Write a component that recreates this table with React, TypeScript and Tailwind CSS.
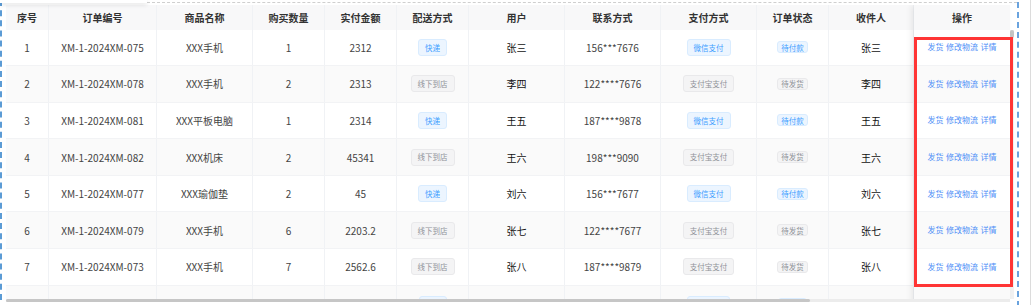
import React from "react";

type Row = {
  no: number;
  code: string;
  goods: string;
  qty: number;
  amount: string;
  ship: string;
  user: string;
  phone: string;
  pay: string;
  status: string;
  receiver: string;
};

const rows: Row[] = [
  { no: 1, code: "XM-1-2024XM-075", goods: "XXX手机", qty: 1, amount: "2312", ship: "快递", user: "张三", phone: "156***7676", pay: "微信支付", status: "待付款", receiver: "张三" },
  { no: 2, code: "XM-1-2024XM-078", goods: "XXX手机", qty: 2, amount: "2313", ship: "线下到店", user: "李四", phone: "122****7676", pay: "支付宝支付", status: "待发货", receiver: "李四" },
  { no: 3, code: "XM-1-2024XM-081", goods: "XXX平板电脑", qty: 1, amount: "2314", ship: "快递", user: "王五", phone: "187****9878", pay: "微信支付", status: "待付款", receiver: "王五" },
  { no: 4, code: "XM-1-2024XM-082", goods: "XXX机床", qty: 2, amount: "45341", ship: "线下到店", user: "王六", phone: "198***9090", pay: "支付宝支付", status: "待发货", receiver: "王六" },
  { no: 5, code: "XM-1-2024XM-077", goods: "XXX瑜伽垫", qty: 2, amount: "45", ship: "快递", user: "刘六", phone: "156***7677", pay: "微信支付", status: "待付款", receiver: "刘六" },
  { no: 6, code: "XM-1-2024XM-079", goods: "XXX手机", qty: 6, amount: "2203.2", ship: "线下到店", user: "张七", phone: "122****7677", pay: "支付宝支付", status: "待发货", receiver: "张七" },
  { no: 7, code: "XM-1-2024XM-073", goods: "XXX手机", qty: 7, amount: "2562.6", ship: "线下到店", user: "张八", phone: "187****9879", pay: "支付宝支付", status: "待发货", receiver: "张八" },
];

const headers = ["序号", "订单编号", "商品名称", "购买数量", "实付金额", "配送方式", "用户", "联系方式", "支付方式", "订单状态", "收件人"];

const cols = "grid grid-cols-[43px_108px_96px_72px_72px_72px_96px_96px_96px_72px_85px]";

function Tag({ children, blue, small }: { children?: React.ReactNode; blue: boolean; small?: boolean }) {
  return (
    <span
      className={`inline-flex items-center justify-center rounded-[3px] border text-[7.5px] leading-none ${
        small ? "h-[12px] px-[3px]" : "h-[17px] px-[6px]"
      } ${blue ? "bg-[#ecf5ff] border-[#d9ecff] text-[#409eff]" : "bg-[#f4f4f5] border-[#e9e9eb] text-[#909399]"}`}
    >
      {children}
    </span>
  );
}

function Cell({ children, className = "" }: { children?: React.ReactNode; className?: string }) {
  return (
    <div className={`flex items-center justify-center border-r border-[#f0f2f5] whitespace-nowrap ${className}`}>
      {children}
    </div>
  );
}

export default function App() {
  return (
    <div className="relative w-[1033px] h-[305px] overflow-hidden bg-white font-['Noto_Sans_CJK_SC',sans-serif]">
      {/* top strip: popover edge + dashed guide */}
      <div className="flex h-[5px]">
        <div className="w-[147px] h-[3px] bg-white shadow-[0_2px_4px_rgba(0,0,0,0.12)] z-10" />
        <div className="w-[870px] mt-[2px] border-t border-dashed border-[#cfcfcf]" />
      </div>

      <div className="flex">
        {/* left guide */}
        <div className="w-[6px] h-[300px] -mt-[5px] border-l-2 border-dashed border-[#5b9bd5]" />

        {/* table */}
        <div className="flex flex-col w-[1008px]">
          <div className="flex h-[294px] overflow-hidden">
            <div className="flex items-start">
              <div className="flex flex-col shrink-0">
                <div className={`${cols} shrink-0 h-[24.5px] bg-[#f8f8f9] text-[10px] font-bold text-[#333]`}>
                  {headers.map((h) => (
                    <Cell key={h}>{h}</Cell>
                  ))}
                </div>
                {rows.map((r, i) => (
                  <div
                    key={r.no}
                    className={`${cols} shrink-0 h-[36.6px] border-b border-[#f2f3f5] text-[10px] text-[#444] ${
                      i % 2 === 1 ? "bg-[#fafafa]" : "bg-white"
                    }`}
                  >
                    <Cell>{r.no}</Cell>
                    <Cell>{r.code}</Cell>
                    <Cell>{r.goods}</Cell>
                    <Cell>{r.qty}</Cell>
                    <Cell>{r.amount}</Cell>
                    <Cell>
                      <Tag blue={r.ship === "快递"}>{r.ship}</Tag>
                    </Cell>
                    <Cell className="text-[#111]">{r.user}</Cell>
                    <Cell>{r.phone}</Cell>
                    <Cell>
                      <Tag blue={r.pay === "微信支付"}>{r.pay}</Tag>
                    </Cell>
                    <Cell>
                      <Tag small blue={r.status === "待付款"}>{r.status}</Tag>
                    </Cell>
                    <Cell className="text-[#111]">{r.receiver}</Cell>
                  </div>
                ))}
                {/* next row, scrolled below the fold: only tag tops show */}
                <div className={`${cols} shrink-0 h-[36.6px] bg-[#fafafa]`}>
                  <Cell />
                  <Cell />
                  <Cell />
                  <Cell />
                  <Cell />
                  <Cell className="items-start pt-[10px]">
                    <span className="w-[28px] h-[17px] rounded-[3px] border border-[#d9ecff] bg-[#ecf5ff]" />
                  </Cell>
                  <Cell />
                  <Cell />
                  <Cell className="items-start pt-[10px]">
                    <span className="w-[43px] h-[17px] rounded-[3px] border border-[#d9ecff] bg-[#ecf5ff]" />
                  </Cell>
                  <Cell className="items-start pt-[12px]">
                    <span className="w-[29px] h-[12px] rounded-[3px] border border-[#d9ecff] bg-[#ecf5ff]" />
                  </Cell>
                  <Cell />
                </div>
              </div>

              {/* fixed right column */}
              <div className="flex flex-col shrink-0 w-[96px] shadow-[-3px_0_6px_rgba(0,0,0,0.07)] z-10">
                <div className="shrink-0 h-[24.5px] flex items-center justify-center bg-[#f8f8f9] text-[10px] font-bold text-[#333]">
                  操作
                </div>
                {rows.map((r, i) => (
                  <div
                    key={r.no}
                    className={`shrink-0 h-[36.6px] flex items-center justify-center gap-[2.5px] border-b border-[#f2f3f5] text-[8px] text-[#4f8ff7] whitespace-nowrap ${
                      i % 2 === 1 ? "bg-[#fafafa]" : "bg-white"
                    }`}
                  >
                    <span>发货</span>
                    <span>修改物流</span>
                    <span>详情</span>
                  </div>
                ))}
                <div className="shrink-0 h-[36.6px] bg-[#fafafa]" />
              </div>
            </div>

            {/* vertical scrollbar */}
            <div className="w-[4px] shrink-0 flex flex-col bg-[#f1f1f1]">
              <div className="h-[25px] bg-white" />
              <div className="h-[8px] bg-[#c4c4c4] rounded-[2px]" />
            </div>
          </div>

          {/* horizontal scrollbar */}
          <div className="flex h-[3px] bg-[#ececec] w-[1004px]">
            <div className="w-[804px] bg-[#c6c6c6] rounded-[2px]" />
          </div>
        </div>

        {/* right guides */}
        <div className="w-[5px] -mt-[3px] h-[305px] border-r-2 border-dashed border-[#6aa3de]" />
        <div className="w-[12px] -mt-[5px] h-[310px] border-r border-[#dcdcdc]" />
      </div>

      {/* annotation box */}
      <div className="absolute z-20 left-[914px] top-[37px] w-[99px] h-[250px] border-[3px] border-[#ff3535]" />
    </div>
  );
}
